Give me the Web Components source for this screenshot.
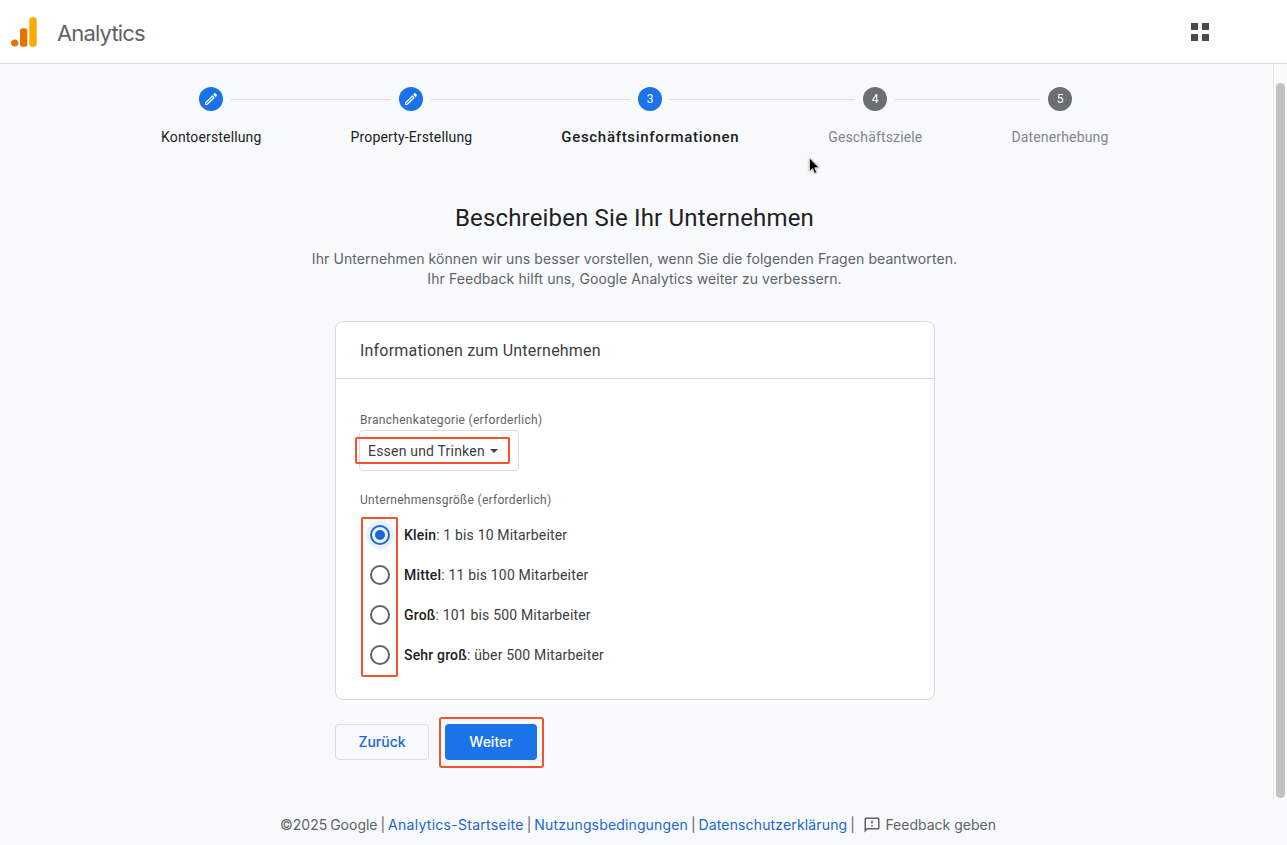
<!DOCTYPE html>
<html lang="de"><head><meta charset="utf-8"><title>Analytics</title>
<style>
html,body{margin:0;height:845px;overflow:hidden}
body{background:#f8f9fa;font-family:Roboto,"Liberation Sans",sans-serif;color:#202124;position:relative}
x-body-row{display:flex;height:736px}
x-page{display:block;flex:1;min-width:0}
x-cursor{position:absolute;left:808px;top:157px;filter:drop-shadow(0 0 1px rgba(0,0,0,.35))}
</style></head><body>
<x-app-header></x-app-header>
<x-body-row>
<x-page>
  <x-stepper>
    <x-step slot="nodes" state="edit" line="160"></x-step>
    <x-step slot="nodes" state="edit" line="199"></x-step>
    <x-step slot="nodes" n="3" state="active" line="185"></x-step>
    <x-step slot="nodes" n="4" line="145"></x-step>
    <x-step slot="nodes" n="5"></x-step>
    <x-step-label slot="labels">Kontoerstellung</x-step-label>
    <x-step-label slot="labels">Property-Erstellung</x-step-label>
    <x-step-label slot="labels" active>Geschäftsinformationen</x-step-label>
    <x-step-label slot="labels" muted>Geschäftsziele</x-step-label>
    <x-step-label slot="labels" muted>Datenerhebung</x-step-label>
  </x-stepper>
  <x-intro heading="Beschreiben Sie Ihr Unternehmen">Ihr Unternehmen können wir uns besser vorstellen, wenn Sie die folgenden Fragen beantworten.<br>Ihr Feedback hilft uns, Google Analytics weiter zu verbessern.</x-intro>
  <x-card heading="Informationen zum Unternehmen">
    <x-field-label>Branchenkategorie (erforderlich)</x-field-label>
    <x-select>Essen und Trinken</x-select>
    <x-field-label second>Unternehmensgröße (erforderlich)</x-field-label>
    <x-radio-group>
      <x-radio checked><b>Klein</b>: 1 bis 10 Mitarbeiter</x-radio>
      <x-radio><b>Mittel</b>: 11 bis 100 Mitarbeiter</x-radio>
      <x-radio><b>Groß</b>: 101 bis 500 Mitarbeiter</x-radio>
      <x-radio><b>Sehr groß</b>: über 500 Mitarbeiter</x-radio>
    </x-radio-group>
  </x-card>
  <x-actions></x-actions>
</x-page>
<x-scrollbar></x-scrollbar>
</x-body-row>
<x-footer></x-footer>
<x-cursor><svg width="12" height="18" viewBox="0 0 12 18"><path d="M1.5 1v13.6l3.100-3 2 4.800 2.100-.9-2-4.700h4.400z" fill="#000" stroke="#fff" stroke-width=".7"/></svg></x-cursor>
<script>
function def(name,html,extra){
  customElements.define(name,class extends HTMLElement{
    constructor(){super();this.attachShadow({mode:'open'}).innerHTML=typeof html==='function'?html(this):html;}
    connectedCallback(){ if(extra) extra(this); }
  });
}
const RED='2px solid #f2522e';
def('x-app-header',`<style>
:host{display:flex;align-items:center;height:63px;background:#fff;border-bottom:1px solid #dadce0;box-sizing:content-box}
svg{display:block}
.logo{margin-left:11px;flex:none}
.name{margin-left:20px;padding-top:2px;font:400 22px/28px Inter,Roboto,sans-serif;color:#5f6368;letter-spacing:-.85px;flex:1}
.apps{margin-right:78px;flex:none}
</style>
<svg class="logo" width="26" height="30" viewBox="0 0 26 30"><circle cx="3.700" cy="26" r="3.600" fill="#e37400"/><rect x="9" y="11.300" width="7.300" height="18.400" rx="2.500" fill="#e37400"/><rect x="18.300" y=".3" width="7.400" height="29.400" rx="2.700" fill="#f9ab00"/></svg>
<span class="name">Analytics</span>
<svg class="apps" width="18" height="18" viewBox="0 0 18 18" fill="#4a4a4a"><rect width="7" height="7"/><rect x="11" width="7" height="7"/><rect y="11" width="7" height="7"/><rect x="11" y="11" width="7" height="7"/></svg>`);
def('x-stepper',`<style>
:host{display:block;padding-top:23px}
.nodes{display:flex;align-items:center;height:24px;margin-left:199px}
.labels{display:flex;align-items:center;gap:89px;margin:15px 0 0 161px;height:22px}
</style><div class="nodes"><slot name="nodes"></slot></div><div class="labels"><slot name="labels"></slot></div>`);
def('x-step',h=>{
  const s=h.getAttribute('state'),n=h.getAttribute('n'),l=h.getAttribute('line');
  const bg=s?'#1a73e8':'#6b6e72';
  const inner=s==='edit'?`<svg width="16" height="16" viewBox="0 0 24 24" fill="#fff"><path d="M3 17.250V21h3.750L17.810 9.940l-3.750-3.750L3 17.250zM5.920 19H5v-.92l9.060-9.060.92.92L5.920 19zM20.710 5.630l-2.340-2.340c-.39-.39-1.020-.39-1.410 0l-1.830 1.830 3.750 3.750 1.830-1.830c.39-.39.39-1.020 0-1.410z"/></svg>`:n;
  return `<style>:host{display:flex;align-items:center}
  .c{width:24px;height:24px;border-radius:50%;background:${bg};color:#fff;display:flex;align-items:center;justify-content:center;font:400 12px/24px Roboto,sans-serif}
  .l{height:1px;background:#dadce0;margin:0 8px;width:${l||0}px;display:${l?'block':'none'}}</style>
  <div class="c">${inner}</div><div class="l"></div>`;
});
def('x-step-label',h=>{
  const a=h.hasAttribute('active'),m=h.hasAttribute('muted');
  return `<style>:host{display:block;white-space:nowrap;font:${a?500:400} ${a?'15px':'14px'}/22px Roboto,sans-serif;letter-spacing:${a?'.69px':'.15px'};color:${m?'#80868b':'#202124'}}</style><slot></slot>`;
});
def('x-intro',h=>`<style>
:host{display:block;width:1269px;text-align:center;padding-top:54px}
h1{margin:0;font:400 24px/32px Roboto,sans-serif;color:#202124;letter-spacing:.16px}
p{margin:15px 0 0;font:400 14px/20px Inter,Roboto,sans-serif;color:#5f6368;letter-spacing:.08px}
</style><h1>${h.getAttribute('heading')}</h1><p><slot></slot></p>`);
def('x-card',h=>`<style>
:host{display:block;width:600px;height:379px;box-sizing:border-box;margin:32px 0 0 335px;background:#fff;border:1px solid #dadce0;border-radius:8px}
h2{margin:0;height:57px;box-sizing:border-box;padding:0 24px;border-bottom:1px solid #dadce0;font:400 16px/58px Roboto,sans-serif;color:#3c4043;letter-spacing:.2px}
.b{padding:33px 24px 0}
</style><h2>${h.getAttribute('heading')}</h2><div class="b"><slot></slot></div>`);
def('x-field-label',h=>`<style>:host{display:block;font:400 12px/16px Roboto,sans-serif;color:#5f6368;letter-spacing:.3px;margin-top:${h.hasAttribute('second')?'21px':'0'}}</style><slot></slot>`);
def('x-select',`<style>
:host{display:flex;align-items:center;position:relative;width:160px;height:41px;box-sizing:border-box;margin:2px 0 0 -1px;border:1px solid #dadce0;border-radius:4px;padding-left:8px;font:400 14px/20px Roboto,sans-serif;color:#3c4043;letter-spacing:.2px}
.a{width:0;height:0;border:4px solid transparent;border-top-color:#3c4043;border-bottom:0;margin-left:5px}
.m{position:absolute;left:-5px;top:6px;width:155px;height:27px;box-sizing:border-box;border:${RED};border-radius:2px}
</style><slot></slot><span class="a"></span><span class="m"></span>`);
def('x-radio-group',`<style>
:host{display:block;position:relative;margin-top:7px}
.m{position:absolute;left:1px;top:2px;width:37px;height:160px;box-sizing:border-box;border:${RED};border-radius:2px}
</style><slot></slot><span class="m"></span>`);
def('x-radio',h=>{const c=h.hasAttribute('checked');return `<style>
:host{display:flex;align-items:center;height:40px;font:400 14px/20px Roboto,sans-serif;color:#3c4043;letter-spacing:.17px}
::slotted(b){font-weight:500;color:#202124}
.w{width:28px;height:28px;margin:0 10px 0 6px;border-radius:50%;display:flex;align-items:center;justify-content:center;background:${c?'#e8f0fe':'transparent'}}
.r{width:20px;height:20px;box-sizing:border-box;border:2px solid ${c?'#1967d2':'#5f6368'};border-radius:50%;display:flex;align-items:center;justify-content:center}
.d{width:10px;height:10px;border-radius:50%;background:#1967d2;display:${c?'block':'none'}}
</style><span class="w"><span class="r"><span class="d"></span></span></span><span><slot></slot></span>`});
def('x-actions',`<style>
:host{display:flex;margin:24px 0 0 335px;gap:16px}
.btn{height:36px;box-sizing:border-box;border-radius:4px;display:flex;align-items:center;justify-content:center;font:500 14px/20px Inter,Roboto,sans-serif}
.z{width:94px;border:1px solid #dadce0;color:#1967d2}
.w{width:92px;background:#1a73e8;color:#fff;position:relative}
.m{position:absolute;left:-6px;top:-7px;width:105px;height:51px;box-sizing:border-box;border:${RED};border-radius:3px}
</style><div class="btn z">Zurück</div><div class="btn w">Weiter<span class="m"></span></div>`);
def('x-scrollbar',`<style>
:host{display:block;width:13px;border-left:1px solid #e8e8e8;box-sizing:content-box;padding-top:19px;background:#fafafa}
.t{width:9px;height:715px;margin-left:2px;background:#c1c1c1;border-radius:5px}
</style><div class="t"></div>`);
def('x-footer',`<style>
:host{display:flex;align-items:center;box-sizing:border-box;height:45px;padding:4px 0 0 280px;font:400 14px/20px Inter,Roboto,sans-serif;color:#5f6368;white-space:pre}
a{color:#1967d2;text-decoration:none}
.c{word-spacing:-1px}
.p{word-spacing:-1px}
.q{word-spacing:-1px;margin-right:-1.500px}
.a1{letter-spacing:.28px}.a2{letter-spacing:.15px}.a3{letter-spacing:.15px}
svg{margin:0 4px 0 7px}
</style><span class="c">©2025 Google | </span><a class="a1">Analytics-Startseite</a><span class="p"> | </span><a class="a2">Nutzungsbedingungen</a><span class="p"> | </span><a class="a3">Datenschutzerklärung</a><span class="q"> | </span><svg width="18" height="18" viewBox="0 0 24 24" fill="#5f6368"><path d="M20 2H4c-1.100 0-2 .9-2 2v18l4-4h14c1.100 0 2-.9 2-2V4c0-1.100-.9-2-2-2zm0 14H5.170L4 17.170V4h16v12zM11 12h2v2h-2zm0-6h2v4h-2z"/></svg><span>Feedback geben</span>`);
</script></body></html>
